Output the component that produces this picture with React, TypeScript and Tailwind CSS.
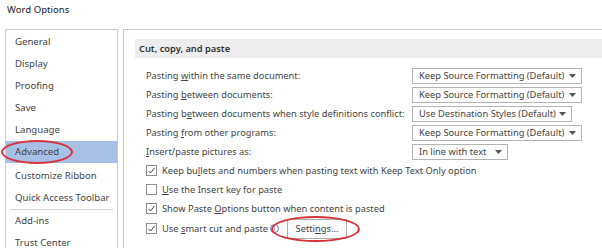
import type { ReactNode } from "react";

const navItems = [
  "General",
  "Display",
  "Proofing",
  "Save",
  "Language",
  "Advanced",
  "Customize Ribbon",
  "Quick Access Toolbar",
];

function Dropdown({ value, width }: { value: string; width: string }) {
  return (
    <div
      className={`flex h-[16px] items-center justify-between whitespace-nowrap border border-[#b4b4b4] bg-white pl-[6px] pr-[5px] text-[#444] ${width}`}
    >
      <span>{value}</span>
      <svg width="7" height="4" viewBox="0 0 7 4">
        <path d="M0 0h7L3.5 4z" fill="#555" />
      </svg>
    </div>
  );
}

function Check({ checked }: { checked: boolean }) {
  return (
    <div className="flex h-[11px] w-[11px] shrink-0 items-center justify-center border border-[#8c8c8c] bg-white">
      {checked && (
        <svg width="9" height="9" viewBox="0 0 9 9">
          <path d="M1.5 4.8 3.6 7 7.6 1.8" fill="none" stroke="#444" strokeWidth="1" />
        </svg>
      )}
    </div>
  );
}

function Row({ label, children }: { label: ReactNode; children?: ReactNode }) {
  return (
    <div className="flex h-[19px] items-center whitespace-nowrap">
      <div className="w-[266px] shrink-0">{label}</div>
      {children}
    </div>
  );
}

function CheckRow({ checked, children }: { checked: boolean; children: ReactNode }) {
  return (
    <div className="flex h-[19px] items-center gap-[5px] whitespace-nowrap">
      <Check checked={checked} />
      <div className="flex items-center">{children}</div>
    </div>
  );
}

export default function App() {
  return (
    <div
      className="relative h-[248px] w-[602px] overflow-hidden bg-white text-[#444]"
      style={{ fontFamily: '"Noto Sans", "Open Sans", sans-serif' }}
    >
      <div className="flex h-[29px] items-center pl-[7px] pb-[9px] text-[9.6px] text-[#222]">
        Word Options
      </div>
      <div className="flex h-[219px] gap-[5px] pl-[5px]">
        <div className="w-[113px] shrink-0 whitespace-nowrap border border-b-0 border-[#c9c9c9] text-[9.6px]">
          <div className="pt-[1px]">
            {navItems.map((item) => (
              <div
                key={item}
                className={`flex h-[22px] items-center pl-[9px] ${
                  item === "Advanced" ? "bg-[#a8c0e6]" : ""
                } ${item === "Customize Ribbon" ? "mt-[2px]" : ""}`}
              >
                {item}
              </div>
            ))}
          </div>
          <div className="mx-[4px] h-px bg-[#d4d4d4]" />
          <div className="flex h-[22px] items-center pl-[9px]">Add-ins</div>
          <div className="flex h-[22px] items-center pl-[9px]">Trust Center</div>
        </div>
        <div className="flex-1 border-l border-t border-[#c9c9c9] pl-[11px] pt-[9px] text-[9.3px]">
          <div className="flex h-[19px] items-center bg-[#ededed] pl-[4px] font-semibold text-[#333]">
            Cut, copy, and paste
          </div>
          <div className="pl-[11px] pt-[8px]">
            <Row
              label={
                <span>
                  Pasting <u>w</u>ithin the same document:
                </span>
              }
            >
              <Dropdown value="Keep Source Formatting (Default)" width="w-[170px]" />
            </Row>
            <Row
              label={
                <span>
                  Pasting <u>b</u>etween documents:
                </span>
              }
            >
              <Dropdown value="Keep Source Formatting (Default)" width="w-[170px]" />
            </Row>
            <Row
              label={
                <span>
                  Pasting b<u>e</u>tween documents when style definitions conflict:
                </span>
              }
            >
              <Dropdown value="Use Destination Styles (Default)" width="w-[160px]" />
            </Row>
            <Row
              label={
                <span>
                  Pasting <u>f</u>rom other programs:
                </span>
              }
            >
              <Dropdown value="Keep Source Formatting (Default)" width="w-[170px]" />
            </Row>
            <Row
              label={
                <span>
                  <u>I</u>nsert/paste pictures as:
                </span>
              }
            >
              <Dropdown value="In line with text" width="w-[96px]" />
            </Row>
            <CheckRow checked>
              <span>
                Keep bu<u>l</u>lets and numbers when pasting text with Keep Text Only option
              </span>
            </CheckRow>
            <CheckRow checked={false}>
              <span>
                <u>U</u>se the Insert key for paste
              </span>
            </CheckRow>
            <CheckRow checked>
              <span>
                Show Paste <u>O</u>ptions button when content is pasted
              </span>
            </CheckRow>
            <div className="flex h-[21px] items-center whitespace-nowrap">
              <Check checked />
              <span className="ml-[5px]">
                Use <u>s</u>mart cut and paste
              </span>
              <div className="ml-[2px] flex h-[9px] w-[9px] items-center justify-center rounded-full border border-[#5b7fb8] text-[7px] leading-none text-[#5b7fb8]">
                i
              </div>
              <div className="ml-[8px] flex h-[20px] w-[60px] items-center justify-center border border-[#adadad] bg-[#fbfbfb]">
                Setti<u>n</u>gs...
              </div>
            </div>
          </div>
        </div>
      </div>
      <div className="pointer-events-none absolute left-[1px] top-[140px] h-[24px] w-[72px] rounded-[50%] border-2 border-[#d8333a]" />
      <div className="pointer-events-none absolute left-[271px] top-[216px] h-[26px] w-[89px] rounded-[50%] border-2 border-[#d8333a]" />
    </div>
  );
}
